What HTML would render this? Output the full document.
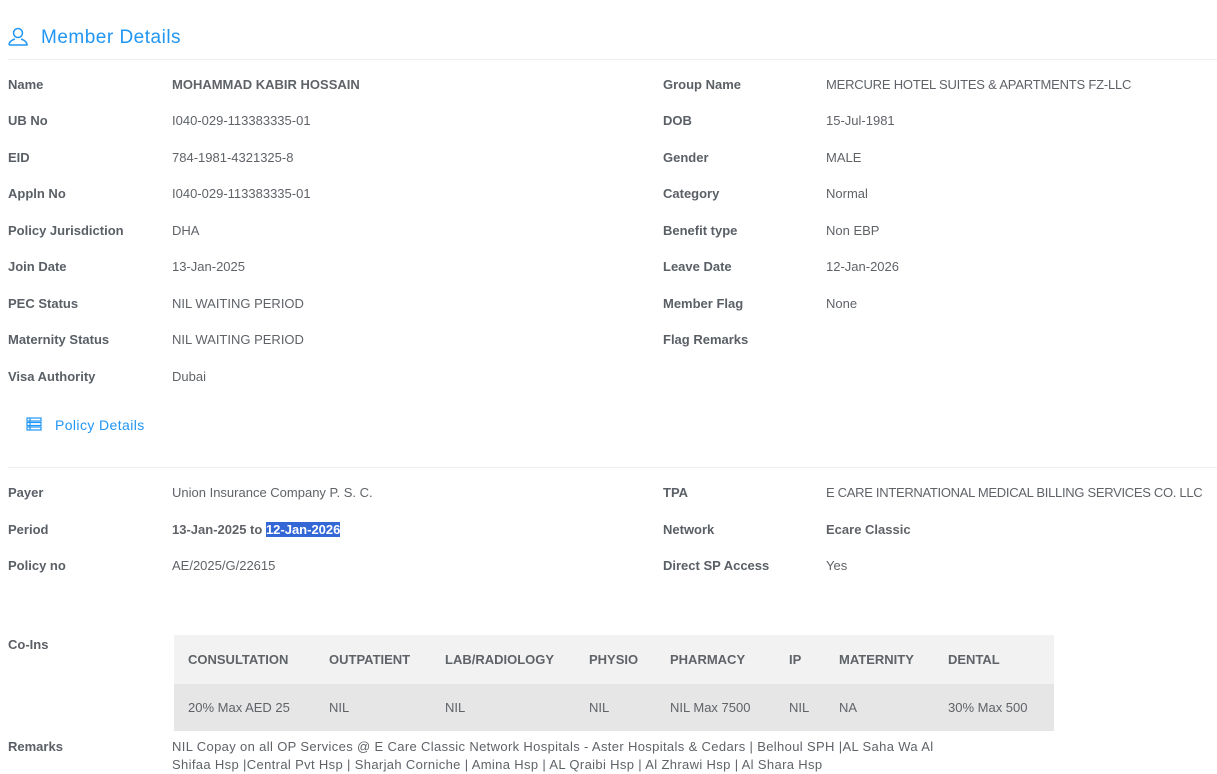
<!DOCTYPE html><html><head><style>
body{margin:0;background:#fff;font-family:"Liberation Sans",sans-serif;font-size:13px;color:#5f6368;width:1217px;height:766px;overflow:hidden;position:relative}
.a{position:absolute;white-space:nowrap;line-height:16px;margin-top:1px}
.l{font-weight:bold;color:#5a5f66}
.b{font-weight:bold}
.h{color:#2196f3}
.line{position:absolute;left:8px;right:0;height:1px;background:#eceff1}
.tb{position:absolute;left:174px;top:635px;width:880px;height:96px}
</style></head><body>
<svg class="a" style="left:8px;top:26px" width="20" height="20" viewBox="0 0 20 20" fill="none" stroke="#2196f3" stroke-width="1.5"><circle cx="10" cy="6" r="4.5"/><path d="M1 18h18c0-3-3-5-6-6M7 12c-3 1-6 3-6 6"/></svg>
<div class="a h" style="left:41px;top:27px;font-size:19px;line-height:20px;letter-spacing:0.5px">Member Details</div>
<div class="line" style="top:59px"></div>
<div class="a l" style="left:8px;top:76px">Name</div><div class="a b" style="left:172px;top:76px">MOHAMMAD KABIR HOSSAIN</div>
<div class="a l" style="left:663px;top:76px">Group Name</div><div class="a" style="left:826px;top:76px;letter-spacing:-0.2px">MERCURE HOTEL SUITES &amp; APARTMENTS FZ-LLC</div>
<div class="a l" style="left:8px;top:112px">UB No</div><div class="a" style="left:172px;top:112px">I040-029-113383335-01</div>
<div class="a l" style="left:663px;top:112px">DOB</div><div class="a" style="left:826px;top:112px">15-Jul-1981</div>
<div class="a l" style="left:8px;top:149px">EID</div><div class="a" style="left:172px;top:149px">784-1981-4321325-8</div>
<div class="a l" style="left:663px;top:149px">Gender</div><div class="a" style="left:826px;top:149px">MALE</div>
<div class="a l" style="left:8px;top:185px">Appln No</div><div class="a" style="left:172px;top:185px">I040-029-113383335-01</div>
<div class="a l" style="left:663px;top:185px">Category</div><div class="a" style="left:826px;top:185px">Normal</div>
<div class="a l" style="left:8px;top:222px">Policy Jurisdiction</div><div class="a" style="left:172px;top:222px">DHA</div>
<div class="a l" style="left:663px;top:222px">Benefit type</div><div class="a" style="left:826px;top:222px">Non EBP</div>
<div class="a l" style="left:8px;top:258px">Join Date</div><div class="a" style="left:172px;top:258px">13-Jan-2025</div>
<div class="a l" style="left:663px;top:258px">Leave Date</div><div class="a" style="left:826px;top:258px">12-Jan-2026</div>
<div class="a l" style="left:8px;top:295px">PEC Status</div><div class="a" style="left:172px;top:295px">NIL WAITING PERIOD</div>
<div class="a l" style="left:663px;top:295px">Member Flag</div><div class="a" style="left:826px;top:295px">None</div>
<div class="a l" style="left:8px;top:331px">Maternity Status</div><div class="a" style="left:172px;top:331px">NIL WAITING PERIOD</div>
<div class="a l" style="left:663px;top:331px">Flag Remarks</div>
<div class="a l" style="left:8px;top:368px">Visa Authority</div><div class="a" style="left:172px;top:368px">Dubai</div>
<svg class="a" style="left:26px;top:416px" width="16" height="14" viewBox="0 0 16 14" fill="none" stroke="#2196f3" stroke-width="1.2"><rect x="1" y="1" width="14" height="3"/><rect x="1" y="5.5" width="14" height="3"/><rect x="1" y="10" width="14" height="3"/><path d="M4 1v12"/></svg>
<div class="a h" style="left:55px;top:416px;font-size:14px;letter-spacing:0.4px">Policy Details</div>
<div class="line" style="top:467px"></div>
<div class="a l" style="left:8px;top:484px">Payer</div><div class="a" style="left:172px;top:484px">Union Insurance Company P. S. C.</div>
<div class="a l" style="left:663px;top:484px">TPA</div><div class="a" style="left:826px;top:484px;letter-spacing:-0.3px">E CARE INTERNATIONAL MEDICAL BILLING SERVICES CO. LLC</div>
<div class="a l" style="left:8px;top:521px">Period</div><div class="a b" style="left:172px;top:521px">13-Jan-2025 to <span style="background:#3367d6;color:#fff">12-Jan-2026</span></div>
<div class="a l" style="left:663px;top:521px">Network</div><div class="a b" style="left:826px;top:521px">Ecare Classic</div>
<div class="a l" style="left:8px;top:557px">Policy no</div><div class="a" style="left:172px;top:557px">AE/2025/G/22615</div>
<div class="a l" style="left:663px;top:557px">Direct SP Access</div><div class="a" style="left:826px;top:557px">Yes</div>
<div class="a l" style="left:8px;top:636px">Co-Ins</div>
<div class="tb"><div style="position:absolute;left:0;top:0;width:880px;height:49px;background:#f2f2f2"></div><div style="position:absolute;left:0;top:49px;width:880px;height:47px;background:#e6e6e6"></div></div>
<div class="a b" style="left:188px;top:651px">CONSULTATION</div><div class="a b" style="left:329px;top:651px">OUTPATIENT</div><div class="a b" style="left:445px;top:651px">LAB/RADIOLOGY</div><div class="a b" style="left:589px;top:651px">PHYSIO</div><div class="a b" style="left:670px;top:651px">PHARMACY</div><div class="a b" style="left:789px;top:651px">IP</div><div class="a b" style="left:839px;top:651px">MATERNITY</div><div class="a b" style="left:948px;top:651px">DENTAL</div>
<div class="a" style="left:188px;top:699px">20% Max AED 25</div><div class="a" style="left:329px;top:699px">NIL</div><div class="a" style="left:445px;top:699px">NIL</div><div class="a" style="left:589px;top:699px">NIL</div><div class="a" style="left:670px;top:699px">NIL Max 7500</div><div class="a" style="left:789px;top:699px">NIL</div><div class="a" style="left:839px;top:699px">NA</div><div class="a" style="left:948px;top:699px">30% Max 500</div>
<div class="a l" style="left:8px;top:738px">Remarks</div>
<div class="a" style="left:172px;top:737px;line-height:18px;letter-spacing:0.35px">NIL Copay on all OP Services @ E Care Classic Network Hospitals - Aster Hospitals &amp; Cedars | Belhoul SPH |AL Saha Wa Al<br>Shifaa Hsp |Central Pvt Hsp | Sharjah Corniche | Amina Hsp | AL Qraibi Hsp | Al Zhrawi Hsp | Al Shara Hsp</div>
</body></html>
